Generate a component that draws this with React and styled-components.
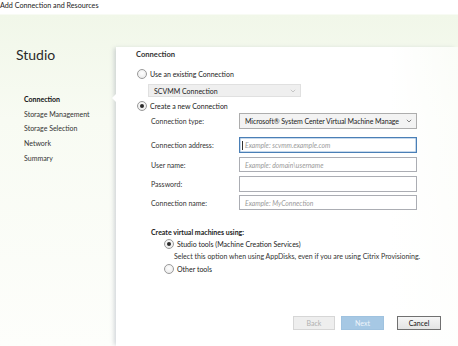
import styled, {createGlobalStyle, css} from "styled-components";

const GlobalStyle = createGlobalStyle`
  html, body {
    margin: 0;
    padding: 0;
    width: 458px;
    height: 346px;
    overflow: hidden;
  }
  body {
    font-family: "Lato", "Open Sans", sans-serif;
    color: #1e1e1e;
    background: #fff;
    white-space: nowrap;
  }
`

const Window = styled.div`
  width: 458px;
  height: 346px;
  display: flex;
  flex-direction: column;
  background: linear-gradient(180deg, #ffffff 0px, #ffffff 14px, #f1f7e9 15px, #f8fbf3 120px, #fdfefb 346px);
`

const TitleBar = styled.div`
  height: 14px;
  flex: none;
  font-size: 7.2px;
  line-height: 11px;
  color: #222;
  background: #fff;
`

const Body = styled.div`
  flex: 1;
  display: flex;
  padding-top: 33px;
`

const Sidebar = styled.div`
  width: 116px;
  flex: none;
  display: flex;
  flex-direction: column;
`

const Brand = styled.div`
  font-size: 14px;
  line-height: 16px;
  margin: 0 0 0 16px;
  color: #2a2a2a;
`

const StepList = styled.div`
  display: flex;
  flex-direction: column;
  margin: 29px 0 0 24px;
`

const Step = styled.div`
  font-size: 7px;
  line-height: 14.7px;
  color: #333;
  ${p => p.$active && css`
    font-weight: 700;
    color: #111;
  `}
`

const Panel = styled.div`
  position: relative;
  flex: 1;
  display: flex;
  flex-direction: column;
  padding: 0 0 0 20px;
  background: linear-gradient(90deg, #ffffff 0%, #ffffff 80%, rgba(255,255,255,0.6) 100%);
  box-shadow: -3px 0 4px -1px rgba(120,130,150,0.3);
`

const Notch = styled.div`
  position: absolute;
  left: -4px;
  top: 47px;
  width: 0;
  height: 0;
  border-top: 4px solid transparent;
  border-bottom: 4px solid transparent;
  border-right: 4px solid #ffffff;
`

const Heading = styled.div`
  font-size: 7.6px;
  font-weight: 700;
  line-height: 12px;
  color: #333;
  margin-top: 1px;
`

const RadioRow = styled.label`
  display: flex;
  align-items: center;
  gap: 3px;
  height: 12px;
  font-size: 7px;
  color: #222;
  margin-top: ${p => p.$mt || 0}px;
  margin-left: ${p => p.$ml || 1}px;
`

const RadioDot = styled.span`
  width: 8px;
  height: 8px;
  border-radius: 50%;
  border: 1px solid #9a9a9a;
  background: radial-gradient(circle at 50% 40%, #ffffff 0%, #e6e6e6 100%);
  flex: none;
  display: flex;
  align-items: center;
  justify-content: center;
  &::after {
    content: "";
    width: 4px;
    height: 4px;
    border-radius: 50%;
    background: ${p => p.$checked ? "#2b2b2b" : "transparent"};
  }
`

const Hint = styled.div`
  font-size: 7px;
  line-height: 12px;
  color: #333;
  margin-left: 38px;
`

const Select = styled.div`
  box-sizing: border-box;
  display: flex;
  align-items: center;
  justify-content: space-between;
  gap: 3px;
  padding: 0 4px 0 5px;
  font-size: 7px;
  width: ${p => p.$w}px;
  height: ${p => p.$h}px;
  color: #222;
  border: 1px solid ${p => p.$disabled ? "#e0e0e0" : "#adadad"};
  background: ${p => p.$disabled ? "#efefef" : "#f3f3f3"};
  margin-left: ${p => p.$ml || 0}px;
  margin-top: ${p => p.$mt || 0}px;
  span {
    letter-spacing: ${p => p.$tight ? "-0.1px" : "0"};
  }
  svg { flex: none; }
`

const FieldGroup = styled.div`
  display: flex;
  flex-direction: column;
  margin-left: 15px;
`

const FieldRow = styled.div`
  display: flex;
  align-items: center;
  margin-top: ${p => p.$mt || 0}px;
`

const Label = styled.div`
  width: 88px;
  flex: none;
  font-size: 7px;
  color: #333;
`

const Input = styled.div`
  box-sizing: border-box;
  width: 178px;
  height: ${p => p.$h || 16}px;
  border: 1px solid ${p => p.$focused ? "#4a7fb6" : "#abadb3"};
  box-shadow: ${p => p.$focused ? "inset 0 0 0 0.5px #8fb3d9" : "none"};
  background: #fff;
  display: flex;
  align-items: center;
  padding-left: 5px;
  font-size: 6.8px;
  font-style: italic;
  color: #9a9a9a;
`

const Caret = styled.span`
  width: 1px;
  height: 9px;
  background: #333;
  margin-right: 2px;
  margin-left: -3px;
`

const SubHeading = styled.div`
  font-size: 7px;
  font-weight: 700;
  line-height: 11px;
  color: #222;
  margin: 17px 0 0 15px;
`

const Footer = styled.div`
  display: flex;
  justify-content: flex-end;
  align-items: center;
  margin-top: auto;
  margin-bottom: 16px;
  padding-right: 17px;
  gap: 6px;
`

const Button = styled.div`
  box-sizing: border-box;
  width: ${p => p.$w || 43}px;
  height: 14px;
  display: flex;
  align-items: center;
  justify-content: center;
  font-size: 7px;
  margin-left: ${p => p.$ml || 0}px;
  ${p => p.$variant === "disabled" && css`
    border: 1px solid #d6d6d6;
    background: #eeeeee;
    color: #b0b0b0;
  `}
  ${p => p.$variant === "primary" && css`
    border: 1px solid #9fc2df;
    background: #a6c8e4;
    color: #eef5fb;
  `}
  ${p => p.$variant === "default" && css`
    border: 1px solid #707070;
    background: linear-gradient(180deg, #f6f6f6, #e4e4e4);
    color: #111;
  `}
`

const Chevron = ({color = "#666"}) => (
  <svg width="6" height="4" viewBox="0 0 6 4">
    <path d="M0.8 0.8 L3 3 L5.2 0.8" fill="none" stroke={color} strokeWidth="0.8"/>
  </svg>
)

const steps = ["Connection", "Storage Management", "Storage Selection", "Network", "Summary"]

const fields = [
  {label: "User name:", placeholder: "Example: domain\\username", mt: 4, h: 15},
  {label: "Password:", placeholder: "", mt: 4, h: 16},
  {label: "Connection name:", placeholder: "Example: MyConnection", mt: 3, h: 15},
]

export default function App() {
  return (
    <>
      <GlobalStyle/>
      <Window>
        <TitleBar>Add Connection and Resources</TitleBar>
        <Body>
          <Sidebar>
            <Brand>Studio</Brand>
            <StepList>
              {steps.map((s, i) => <Step key={s} $active={i === 0}>{s}</Step>)}
            </StepList>
          </Sidebar>
          <Panel>
            <Notch/>
            <Heading>Connection</Heading>
            <RadioRow $mt={8}><RadioDot/>Use an existing Connection</RadioRow>
            <Select $disabled $w={153} $h={13} $ml={12} $mt={4}>
              <span>SCVMM Connection</span><Chevron color="#bbb"/>
            </Select>
            <RadioRow $mt={3}><RadioDot $checked/>Create a new Connection</RadioRow>
            <FieldGroup>
              <FieldRow $mt={1}>
                <Label>Connection type:</Label>
                <Select $w={178} $h={16} $tight>
                  <span>Microsoft® System Center Virtual Machine Manage</span><Chevron/>
                </Select>
              </FieldRow>
              <FieldRow $mt={8}>
                <Label>Connection address:</Label>
                <Input $focused><Caret/>Example: scvmm.example.com</Input>
              </FieldRow>
              {fields.map(f => (
                <FieldRow key={f.label} $mt={f.mt}>
                  <Label>{f.label}</Label>
                  <Input $h={f.h}>{f.placeholder}</Input>
                </FieldRow>
              ))}
            </FieldGroup>
            <SubHeading>Create virtual machines using:</SubHeading>
            <RadioRow $ml={28}><RadioDot $checked/>Studio tools (Machine Creation Services)</RadioRow>
            <Hint>Select this option when using AppDisks, even if you are using Citrix Provisioning.</Hint>
            <RadioRow $ml={28} $mt={1}><RadioDot/>Other tools</RadioRow>
            <Footer>
              <Button $variant="disabled" $w={42}>Back</Button>
              <Button $variant="primary" $w={43}>Next</Button>
              <Button $variant="default" $w={44} $ml={7}>Cancel</Button>
            </Footer>
          </Panel>
        </Body>
      </Window>
    </>
  )
}
